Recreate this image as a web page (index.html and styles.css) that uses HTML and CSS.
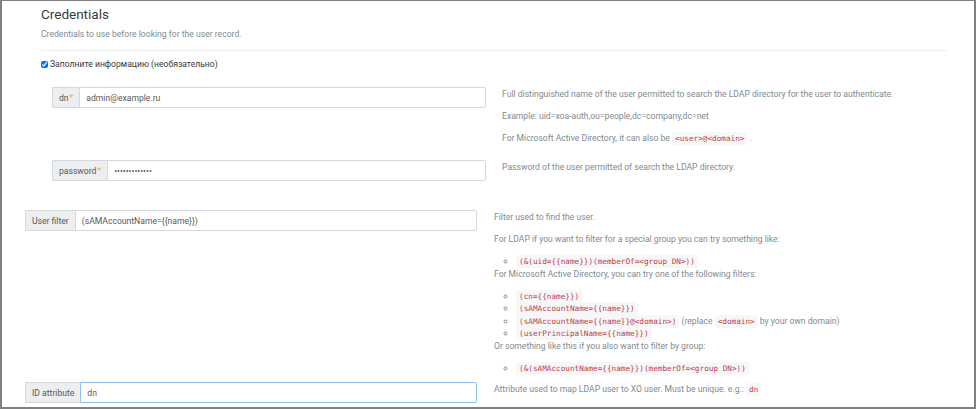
FILE: index.html
```html
<!DOCTYPE html>
<html lang="ru">
<head>
<meta charset="utf-8">
<title>Credentials</title>
<link rel="stylesheet" href="styles.css">
</head>
<body>
<div class="frame">
  <section class="credentials">
    <h4 class="title">Credentials</h4>
    <p class="subtitle">Credentials to use before looking for the user record.</p>
    <hr class="divider">
    <label class="check"><input class="check-box" type="checkbox" checked> Заполните информацию (необязательно)</label>
    <div class="nested">
      <div class="field-row">
        <div class="input-group">
          <span class="addon">dn<span class="req">*</span></span>
          <input class="control" type="text" value="admin@example.ru">
        </div>
        <div class="help">
          <p>Full distinguished name of the user permitted to search the LDAP directory for the user to authenticate.</p>
          <p>Example: uid=xoa-auth,ou=people,dc=company,dc=net</p>
          <p>For Microsoft Active Directory, it can also be <code>&lt;user&gt;@&lt;domain&gt;</code> .</p>
        </div>
      </div>
      <div class="field-row">
        <div class="input-group">
          <span class="addon">password<span class="req">*</span></span>
          <input class="control" type="password" value="xxxxxxxxxxxxx">
        </div>
        <div class="help">
          <p>Password of the user permitted of search the LDAP directory.</p>
        </div>
      </div>
    </div>
  </section>
  <div class="outer">
    <div class="field-row wide">
      <div class="input-group">
        <span class="addon">User filter</span>
        <input class="control" type="text" value="(sAMAccountName={{name}})">
      </div>
      <div class="help">
        <p>Filter used to find the user.</p>
        <p>For LDAP if you want to filter for a special group you can try something like:</p>
        <ul>
          <li><code>(&amp;(uid={{name}})(memberOf=&lt;group DN&gt;))</code></li>
        </ul>
        <p>For Microsoft Active Directory, you can try one of the following filters:</p>
        <ul>
          <li><code>(cn={{name}})</code></li>
          <li><code>(sAMAccountName={{name}})</code></li>
          <li><code>(sAMAccountName={{name}}@&lt;domain&gt;)</code> (replace <code>&lt;domain&gt;</code> by your own domain)</li>
          <li><code>(userPrincipalName={{name}})</code></li>
        </ul>
        <p>Or something like this if you also want to filter by group:</p>
        <ul>
          <li><code>(&amp;(sAMAccountName={{name}})(memberOf=&lt;group DN&gt;))</code></li>
        </ul>
      </div>
    </div>
    <div class="field-row wide">
      <div class="input-group">
        <span class="addon">ID attribute</span>
        <input class="control focused" type="text" value="dn">
      </div>
      <div class="help">
        <p>Attribute used to map LDAP user to XO user. Must be unique. e.g.: <code>dn</code></p>
      </div>
    </div>
  </div>
</div>
</body>
</html>
```
FILE: styles.css
```css
* { box-sizing: border-box; }
html, body { margin: 0; padding: 0; background: #ffffff; }
body { font-family: Roboto, "Noto Sans", "Liberation Sans", sans-serif; color: #373a3c; }

.frame {
  width: 976px;
  height: 409px;
  overflow: hidden;
  border: 2px solid #808080;
  border-top-width: 1px;
  background: #ffffff;
}

.credentials { padding: 5px 27px 0 39px; }

.title {
  margin: 0;
  font-size: 13.5px;
  line-height: 16px;
  font-weight: 400;
  color: #373a3c;
}
.subtitle {
  margin: 6px 0 0;
  font-size: 8.6px;
  line-height: 12px;
  color: #818a91;
}
.divider {
  margin: 10px 0 0;
  border: 0;
  border-top: 1px solid #eceeef;
  height: 0;
}
.check {
  display: flex;
  align-items: center;
  margin-top: 7px;
  font-size: 8.6px;
  line-height: 12px;
  color: #373a3c;
}
.check-box {
  width: 7px;
  height: 7px;
  margin: 0 2px 0 0;
  accent-color: #0075ff;
}

.nested { margin: 17px 0 0 11px; }
.nested .field-row { grid-template-columns: 434px 1fr; column-gap: 16px; margin-bottom: 16px; }
.nested .field-row:last-child { margin-bottom: 0; }

.outer { padding: 29px 27px 0 23px; }
.field-row {
  display: grid;
  align-items: start;
}
.field-row.wide { grid-template-columns: 452px 1fr; column-gap: 17px; margin-bottom: 8px; }

.input-group { display: flex; height: 21px; }
.addon {
  display: flex;
  align-items: center;
  padding: 0 6px;
  background: #eceeef;
  border: 1px solid #d5d7d9;
  border-right: 0;
  border-radius: 2px 0 0 2px;
  font-size: 8.6px;
  color: #55595c;
  white-space: nowrap;
}
.req { color: #f0ad4e; margin-left: 1px; }
.control {
  flex: 1;
  min-width: 0;
  height: 21px;
  margin: 0;
  padding: 0 6px;
  border: 1px solid #d5d7d9;
  border-radius: 0 2px 2px 0;
  font-family: Roboto, "Noto Sans", "Liberation Sans", sans-serif;
  font-size: 8.6px;
  color: #55595c;
  background: #ffffff;
  outline: none;
}
.control.focused { border-color: #8fc3ef; }

.help { font-size: 8.6px; color: #818a91; line-height: 12px; padding-top: 1px; }
.help p { margin: 0 0 10px; }
.help > p:last-child { margin-bottom: 0; }
.help ul { margin: 0; padding-left: 22px; list-style-type: circle; }
.help li { line-height: 12.5px; }

code {
  font-family: "DejaVu Sans Mono", "Liberation Mono", monospace;
  font-size: 7.7px;
  line-height: 1;
  color: #bd4147;
  background: #f7f7f9;
  padding: 2px 3px;
  border-radius: 2px;
}
```
